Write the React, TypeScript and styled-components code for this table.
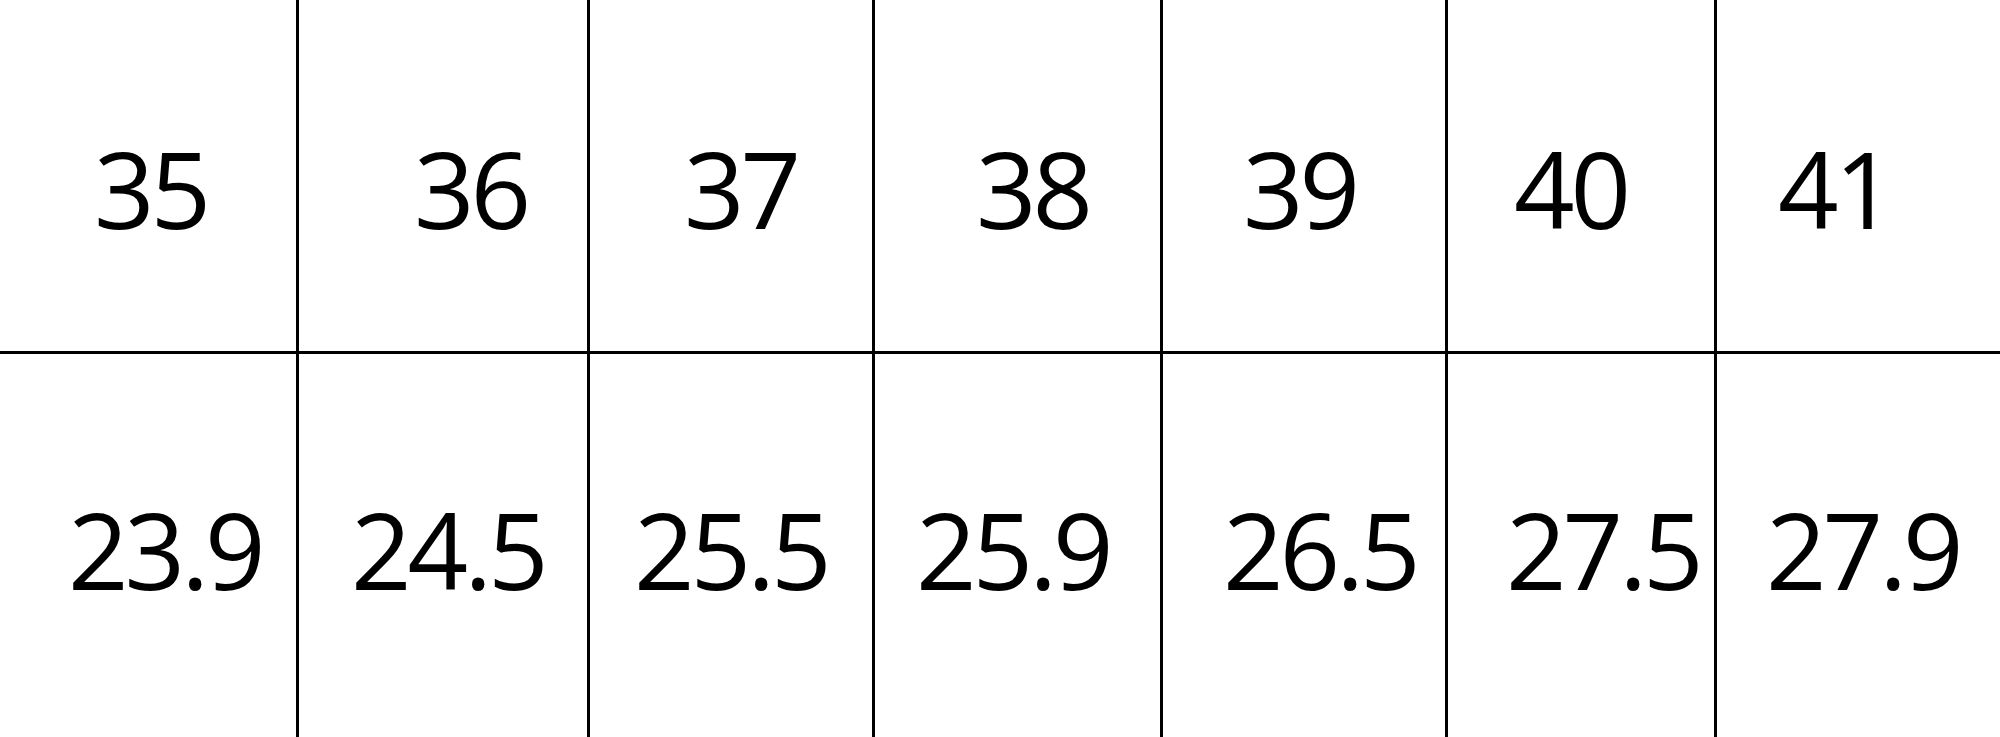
import React from 'react';
import styled, { createGlobalStyle } from 'styled-components';

const GlobalStyle = createGlobalStyle`
  html, body {
    margin: 0;
    padding: 0;
    background: #ffffff;
  }
  body {
    font-family: 'Open Sans', 'Noto Sans', sans-serif;
    color: #000000;
  }
`;

const Table = styled.div<{ $columns: string }>`
  display: grid;
  grid-template-columns: ${(props) => props.$columns};
  grid-template-rows: 354px 383px;
  width: 2000px;
  height: 737px;
  overflow: hidden;
`;

const Cell = styled.div<{ $indent: number; $top: number; $last: boolean; $header: boolean }>`
  box-sizing: border-box;
  padding-left: ${(props) => props.$indent}px;
  padding-top: ${(props) => props.$top}px;
  border-right: ${(props) => (props.$last ? 'none' : '3px solid #000000')};
  border-bottom: ${(props) => (props.$header ? '3px solid #000000' : 'none')};
  font-size: 106px;
  line-height: 1;
  letter-spacing: -4px;
  white-space: nowrap;
`;

// widths include the 3px rule on the right
const columnWidths = [299, 291, 285, 288, 285, 269, 283];

const sizes = [
  { size: '35', indent: 94 },
  { size: '36', indent: 115 },
  { size: '37', indent: 94 },
  { size: '38', indent: 101 },
  { size: '39', indent: 80 },
  { size: '40', indent: 66 },
  { size: '41', indent: 61 },
];

const lengths = [
  { length: '23.9', indent: 68 },
  { length: '24.5', indent: 52 },
  { length: '25.5', indent: 44 },
  { length: '25.9', indent: 41 },
  { length: '26.5', indent: 60 },
  { length: '27.5', indent: 58 },
  { length: '27.9', indent: 49 },
];

const App: React.FC = () => {
  const last = columnWidths.length - 1;

  return (
    <>
      <GlobalStyle />
      <Table $columns={columnWidths.map((w) => `${w}px`).join(' ')}>
        {sizes.map((item, idx) => (
          <Cell key={item.size} $indent={item.indent} $top={135} $last={idx === last} $header>
            {item.size}
          </Cell>
        ))}
        {lengths.map((item, idx) => (
          <Cell key={item.length} $indent={item.indent} $top={142} $last={idx === last} $header={false}>
            {item.length}
          </Cell>
        ))}
      </Table>
    </>
  );
};

export default App;
